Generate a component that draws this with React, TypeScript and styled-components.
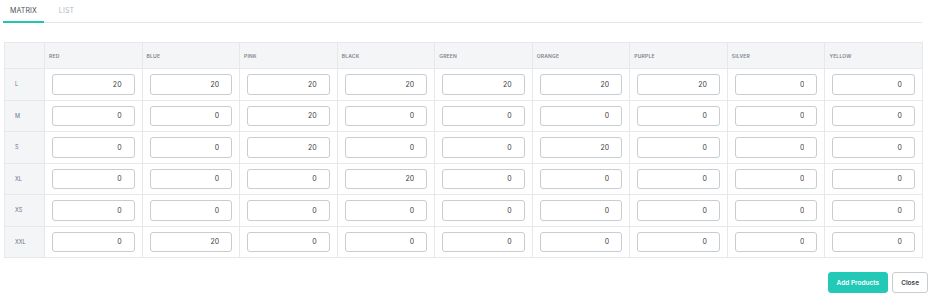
import React, { useState } from "react";
import { styled, createGlobalStyle } from "styled-components";

const GlobalStyle = createGlobalStyle`
  body {
    margin: 0;
    background: #ffffff;
    font-family: "Inter", "Noto Sans", sans-serif;
  }
`;

const COLORS = ["RED", "BLUE", "PINK", "BLACK", "GREEN", "ORANGE", "PURPLE", "SILVER", "YELLOW"];
const SIZES = ["L", "M", "S", "XL", "XS", "XXL"];

const INITIAL: Record<string, number[]> = {
  L: [20, 20, 20, 20, 20, 20, 20, 0, 0],
  M: [0, 0, 20, 0, 0, 0, 0, 0, 0],
  S: [0, 0, 20, 0, 0, 20, 0, 0, 0],
  XL: [0, 0, 0, 20, 0, 0, 0, 0, 0],
  XS: [0, 0, 0, 0, 0, 0, 0, 0, 0],
  XXL: [0, 20, 0, 0, 0, 0, 0, 0, 0],
};

const Page = styled.div`
  width: 932px;
  height: 299px;
  box-sizing: border-box;
  padding: 0 4px 0 3px;
  display: flex;
  flex-direction: column;
`;

const TabBar = styled.div`
  display: flex;
  width: 919px;
  height: 23px;
  border-bottom: 1px solid #e4e6ea;
  box-sizing: border-box;
`;

const Tab = styled.button<{ $active?: boolean }>`
  background: none;
  border: none;
  margin: 0 8px 0 0;
  padding: 0 7px;
  height: 23px;
  box-sizing: border-box;
  font-family: "Inter", "Noto Sans", sans-serif;
  font-size: 7px;
  letter-spacing: 0.1px;
  color: ${(p) => (p.$active ? "#4a4f58" : "#b4b8bf")};
  border-bottom: 2px solid ${(p) => (p.$active ? "#21c3b1" : "transparent")};
  margin-bottom: -1px;
  cursor: pointer;
`;

const Table = styled.table`
  margin: 19px 0 0 1px;
  width: 919px;
  border-collapse: collapse;
  table-layout: fixed;
  border: 1px solid #e6e8eb;
`;

const HeadCell = styled.th`
  height: 25px;
  padding: 0 4px;
  background: #f4f5f7;
  border: 1px solid #e6e8eb;
  text-align: left;
  font-size: 5px;
  font-weight: 600;
  color: #7f848d;
  letter-spacing: 0.2px;
`;

const SizeCell = styled.td`
  background: #f4f5f7;
  border: 1px solid #e6e8eb;
  padding: 0 10px;
  font-size: 5.5px;
  color: #6f747d;
`;

const Cell = styled.td`
  border: 1px solid #e6e8eb;
  padding: 5px 7px 5px 7px;
`;

const QtyInput = styled.input`
  display: block;
  width: 100%;
  height: 20.5px;
  box-sizing: border-box;
  border: 1px solid #c9ccd1;
  border-radius: 3px;
  padding: 0 12px 0 6px;
  text-align: right;
  font-family: "Inter", "Noto Sans", sans-serif;
  font-size: 7px;
  color: #3b3f45;
  outline: none;
`;

const Footer = styled.div`
  display: flex;
  justify-content: flex-end;
  gap: 4px;
  margin-top: 14px;
`;

const Button = styled.button<{ $primary?: boolean }>`
  height: 21px;
  padding: 0 8px;
  border-radius: 3px;
  font-family: "Inter", "Noto Sans", sans-serif;
  font-size: 6.5px;
  font-weight: 600;
  cursor: pointer;
  background: ${(p) => (p.$primary ? "#22c9b6" : "#ffffff")};
  color: ${(p) => (p.$primary ? "#ffffff" : "#3b3f45")};
  border: 1px solid ${(p) => (p.$primary ? "#22c9b6" : "#c9ccd1")};
`;

const App: React.FC = () => {
  const [tab, setTab] = useState<string>("MATRIX");
  const [matrix, setMatrix] = useState<Record<string, number[]>>(INITIAL);

  const onChange = (size: string, idx: number, value: string) => {
    const next = [...matrix[size]];
    next[idx] = Number(value) || 0;
    setMatrix({ ...matrix, [size]: next });
  };

  return (
    <Page>
      <GlobalStyle />
      <TabBar>
        <Tab $active={tab === "MATRIX"} onClick={() => setTab("MATRIX")}>
          MATRIX
        </Tab>
        <Tab $active={tab === "LIST"} onClick={() => setTab("LIST")}>
          LIST
        </Tab>
      </TabBar>
      <Table>
        <colgroup>
          <col style={{ width: 40 }} />
          {COLORS.map((c) => (
            <col key={c} />
          ))}
        </colgroup>
        <thead>
          <tr>
            <HeadCell />
            {COLORS.map((c) => (
              <HeadCell key={c}>{c}</HeadCell>
            ))}
          </tr>
        </thead>
        <tbody>
          {SIZES.map((size) => (
            <tr key={size}>
              <SizeCell>{size}</SizeCell>
              {matrix[size].map((v, i) => (
                <Cell key={i}>
                  <QtyInput value={v} onChange={(e) => onChange(size, i, e.target.value)} />
                </Cell>
              ))}
            </tr>
          ))}
        </tbody>
      </Table>
      <Footer>
        <Button $primary>Add Products</Button>
        <Button>Close</Button>
      </Footer>
    </Page>
  );
};

export default App;
